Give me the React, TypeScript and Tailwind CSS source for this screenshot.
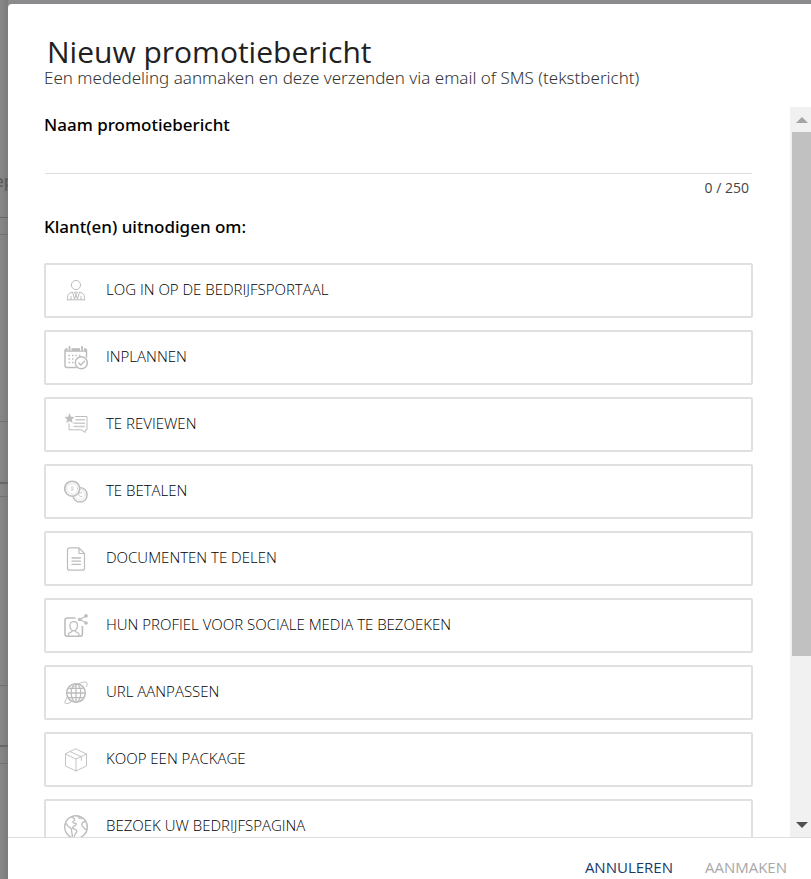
import { useState } from 'react';
import type { ReactNode } from 'react';

const MAX_NAME_LENGTH = 250;

function Icon({ children }: { children: ReactNode }) {
  return (
    <svg
      viewBox="0 0 24 24"
      className="w-6 h-6 shrink-0"
      fill="none"
      stroke="#bdbdbd"
      strokeWidth="1"
      strokeLinecap="round"
      strokeLinejoin="round"
      aria-hidden="true"
    >
      {children}
    </svg>
  );
}

const PersonIcon = () => (
  <Icon>
    <circle cx="12" cy="6" r="4.6" />
    <path d="M3.500 20.800v-2.600c0-2.400 1.500-4.300 4.500-4.900M20.500 20.800v-2.600c0-2.400-1.500-4.300-4.500-4.900M3.500 20.800h17M8.500 13.200l2 6.800 1.500-4 1.500 4 2-6.800M10.500 13.200h3L12 15.500zM7 17.500v3.300M17 17.500v3.300" />
  </Icon>
);

const CalendarIcon = () => (
  <Icon>
    <path d="M12 21.500H3a2 2 0 0 1-2-2V4.500a1.500 1.500 0 0 1 1.500-1.500h18.500a1.500 1.500 0 0 1 1.500 1.500V11" strokeWidth="1.500" />
    <path d="M1.500 4.300h20.500" strokeWidth="3" strokeLinecap="butt" />
    <path d="M5.500 0v4.500M18 0v4.500" stroke="#fff" strokeWidth="4" strokeLinecap="butt" />
    <path d="M5.500.8V4M18 .8V4" strokeWidth="1.800" />
    <path d="M8 9.500h1.500M11.500 9.500H13M15 9.500h1.500M4.500 13H6M8 13h1.500M4.500 16.500H6M8 16.500h1.500M4.500 9.500H6" strokeWidth="1.700" strokeLinecap="butt" />
    <circle cx="17.300" cy="16.800" r="6" fill="#fff" strokeWidth="1.500" />
    <path d="m14.800 17 2 2 3.700-3.800" strokeWidth="1.400" />
  </Icon>
);

const ReviewIcon = () => (
  <Icon>
    <path d="m5.500.8 1.300 3.100 3.300.3-2.500 2.200.8 3.200-2.900-1.700-2.900 1.700.8-3.200L.9 4.200l3.300-.3z" fill="#bdbdbd" strokeWidth=".4" />
    <path d="M11.500 3.500H23v13.300h-1.800v2.600L17 16.800H5v-6" strokeLinejoin="miter" />
    <path d="M12 6.700h8.500M10 10.200h10.500M10 13.500h10.500" strokeWidth="1.500" stroke="#cccccc" />
  </Icon>
);

const CoinsIcon = () => (
  <Icon>
    <circle cx="16" cy="14.800" r="7.200" strokeWidth="1.400" />
    <circle cx="16" cy="14.800" r="5.200" strokeWidth=".4" />
    <path d="M17.700 12.800c-2-.8-3 .5-2.900 1.900s1.200 2.300 3 1.700" strokeWidth=".8" />
    <circle cx="8.200" cy="8.700" r="7.500" fill="#fff" strokeWidth="1.600" />
    <circle cx="8.200" cy="8.700" r="5.500" strokeWidth=".4" />
    <path d="M9.200 7.400C8.200 6.700 7.200 7.100 7.300 7.900s1.900.6 1.900 1.600-1.100 1.100-2 .5" strokeWidth=".8" />
  </Icon>
);

const DocumentIcon = () => (
  <Icon>
    <path d="M15 .8H5.500a2 2 0 0 0-2 2v18.400a2 2 0 0 0 2 2h13a2 2 0 0 0 2-2V6.500zV6.500h5.500" strokeWidth="1.200" />
    <path d="M8 11h8.500M8 14.200h8.500M8 17.400h8.500" strokeWidth="1.300" />
  </Icon>
);

const SocialIcon = () => (
  <Icon>
    <path d="M11.500 4H3.200A2.200 2.200 0 0 0 1 6.200V20a2.200 2.200 0 0 0 2.200 2.200h13A2.200 2.200 0 0 0 18.400 20v-8" strokeWidth="1.600" strokeLinecap="butt" />
    <path d="M5.900 11.500c0-2.300 1.400-3.800 3.800-3.800s3.800 1.500 3.800 3.800-1.300 5.300-3.800 5.300-3.800-3-3.800-5.300zM8 16.200v1.300l-3.200 1.700-.5 2.800M11.400 16.200v1.300l3.200 1.700.5 2.800" strokeWidth="1.300" />
    <path d="m22 2-6.300 3.600L22 8.800" strokeWidth="1.100" />
    <g fill="#bdbdbd" stroke="none">
      <circle cx="22" cy="1.900" r="1.800" />
      <circle cx="15.600" cy="5.500" r="1.800" />
      <circle cx="22" cy="9" r="1.800" />
    </g>
  </Icon>
);

const UrlIcon = () => (
  <Icon>
    <circle cx="12" cy="12" r="9.300" strokeWidth="1.600" />
    <path d="M2.700 12h18.600M12 2.700v18.600M4.500 7.300h15M4.500 16.700h15" strokeWidth="1.300" />
    <ellipse cx="12" cy="12" rx="4.800" ry="9.300" strokeWidth="1.300" />
    <path d="M13.500 3.500C17.500 1 21.500.4 22.700 1.600c.8.800.6 2.100-.2 3.900M3 16.500C1 19.500.4 21.500 1.300 22.300c1 .9 3.400.1 5.700-1.300" />
    <path d="M7 8.500c1.700-2.200 3.800-3.700 6.500-5" />
  </Icon>
);

const PackageIcon = () => (
  <Icon>
    <path d="m12 1 10.500 5v12L12 23 1.500 18V6zM1.500 6 12 11l10.500-5M12 11v12M6.300 3.700l11 5v3.600" strokeWidth=".9" />
  </Icon>
);

const GlobeIcon = () => (
  <Icon>
    <circle cx="12" cy="12" r="11.300" strokeWidth="1.400" />
    <path d="M7.800 2.200c.8 1 2.700.6 2.900 2S8.500 6 8.900 7.400s2.700.2 3.400 1.400-2 2-3.400 3.200 1.300 1.800 2.800 2.600 1.500 2.200.2 3.400-1.700 2.600-1.700 5M1.500 8.500c1.700.2 1.700 2.200 3.200 3.200s3.200 1.700 2.900 3.600.8 3.400.8 6M14 1l1.400 2.400 3.200-.3M21.500 6.500c-2 .2-3.900 1.400-3.700 3.500s2.200 1.700 2.600 3.200 1.200 1.500 2.400 1.300" strokeWidth="1.300" />
  </Icon>
);

const invitations = [
  { label: 'LOG IN OP DE BEDRIJFSPORTAAL', icon: <PersonIcon /> },
  { label: 'INPLANNEN', icon: <CalendarIcon /> },
  { label: 'TE REVIEWEN', icon: <ReviewIcon /> },
  { label: 'TE BETALEN', icon: <CoinsIcon /> },
  { label: 'DOCUMENTEN TE DELEN', icon: <DocumentIcon /> },
  { label: 'HUN PROFIEL VOOR SOCIALE MEDIA TE BEZOEKEN', icon: <SocialIcon /> },
  { label: 'URL AANPASSEN', icon: <UrlIcon /> },
  { label: 'KOOP EEN PACKAGE', icon: <PackageIcon /> },
  { label: 'BEZOEK UW BEDRIJFSPAGINA', icon: <GlobeIcon /> },
];

// The strip of the page that stays visible behind the dialog
function Backdrop() {
  return (
    <div className="w-2 shrink-0 flex flex-col overflow-hidden bg-gradient-to-r from-[#888888] to-[#7b7b7b] text-[#5c5c5c]">
      <div className="h-[218px] shrink-0 border-b border-[#666666] flex items-end justify-center pb-6">
        <span className="text-base font-semibold">ep</span>
      </div>
      <div className="mt-4 h-[188px] shrink-0 border-y border-[#727272]" />
      <div className="h-[62px] shrink-0 border-b-2 border-[#686868]" />
      <div className="mt-3 h-[190px] shrink-0 border-y border-[#727272]" />
      <div className="h-[61px] shrink-0 border-b-2 border-[#686868]" />
      <div className="mt-4 grow border-t border-[#727272]" />
    </div>
  );
}

function ScrollBar() {
  return (
    <div className="w-[21px] shrink-0 bg-[#f1f1f1] flex flex-col pl-0.5" aria-hidden="true">
      <div className="h-[25px] shrink-0 flex items-center justify-center">
        <svg viewBox="0 0 12 6" className="w-3 h-1.5" fill="#a3a3a3">
          <path d="M6 0l6 6H0z" />
        </svg>
      </div>
      <div className="grow flex flex-col">
        <div className="basis-[77%] bg-[#c1c1c1]" />
      </div>
      <div className="h-[25px] shrink-0 flex items-center justify-center">
        <svg viewBox="0 0 12 6" className="w-3 h-1.5" fill="#505050">
          <path d="M6 6l6-6H0z" />
        </svg>
      </div>
    </div>
  );
}

export default function App() {
  const [name, setName] = useState('');

  return (
    <div className="h-screen flex overflow-hidden bg-[#8b8b8d] font-['Open_Sans',sans-serif]">
      <Backdrop />
      <div role="dialog" aria-labelledby="dialog-title" className="grow min-w-0 mt-1 flex flex-col rounded-tl bg-white">
        <header className="h-[103px] shrink-0 pt-8 pl-9">
          <h1 id="dialog-title" className="pl-[3px] text-[30px] leading-8 font-medium text-[#212121]">
            Nieuw promotiebericht
          </h1>
          <p className="text-[17px] leading-5 font-light font-['Noto_Sans',sans-serif] text-[#333333]">
            Een mededeling aanmaken en deze verzenden via email of SMS (tekstbericht)
          </p>
        </header>

        <div className="grow min-h-0 flex">
          <div className="grow min-w-0 overflow-hidden pl-9 pr-[37px] pt-1.5">
            <label
              htmlFor="promo-name"
              className="block text-[17px] leading-6 font-medium font-['Noto_Sans',sans-serif] text-black"
            >
              Naam promotiebericht
            </label>
            <div className="px-px">
              <input
                id="promo-name"
                type="text"
                maxLength={MAX_NAME_LENGTH}
                value={name}
                onChange={(e) => setName(e.target.value)}
                className="block w-full h-[37px] border-b border-[#dedede] outline-none text-sm"
              />
            </div>
            <div className="pt-1 pr-1 text-right text-sm leading-5 text-[#444444]">
              {name.length} / {MAX_NAME_LENGTH}
            </div>

            <h2 className="mt-[17px] text-[17px] leading-6 font-medium font-['Noto_Sans',sans-serif] text-black">
              Klant(en) uitnodigen om:
            </h2>
            <div className="mt-6 flex flex-col gap-3">
              {invitations.map((item) => (
                <button
                  key={item.label}
                  type="button"
                  className="h-[55px] flex items-center gap-[18px] pl-[18px] border-2 border-[#e0e0e0] rounded-xs text-[15px] leading-5 text-left font-light text-black"
                >
                  {item.icon}
                  <span className="pb-[3px]">{item.label}</span>
                </button>
              ))}
            </div>
          </div>
          <ScrollBar />
        </div>

        <footer className="h-[42px] shrink-0 border-t border-[#dedede] flex justify-end items-start gap-8 pt-[19px] pr-6 text-[15px] leading-5">
          <button type="button" className="text-[#173a6a]">
            ANNULEREN
          </button>
          <button type="button" disabled className="text-[#a8a8a8]">
            AANMAKEN
          </button>
        </footer>
      </div>
    </div>
  );
}
